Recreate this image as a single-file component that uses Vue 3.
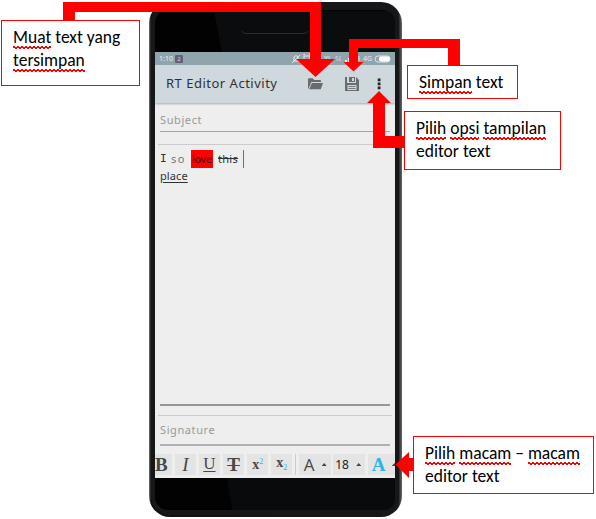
<script setup>
const callouts = [
  { id: 'load', lines: [[['Muat', true], [' text yang']], [['tersimpan', true]]] },
  { id: 'save', lines: [[['Simpan', true], [' text']]] },
  { id: 'options', lines: [[['Pilih', true], [' '], ['opsi', true], [' '], ['tampilan', true]], [['editor text']]] },
  { id: 'tools', lines: [[['Pilih', true], [' '], ['macam', true], [' – '], ['macam', true]], [['editor text']]] },
]
</script>

<template>
  <main class="canvas">
    <section class="phone">
      <svg class="shell" viewBox="0 0 253 515">
        <defs>
          <linearGradient id="rim" x1="0" x2="1">
            <stop offset="0" stop-color="#777" /><stop offset=".008" stop-color="#111" />
            <stop offset=".985" stop-color="#17191b" /><stop offset="1" stop-color="#66696b" />
          </linearGradient>
        </defs>
        <rect width="253" height="515" rx="21" fill="url(#rim)" />
        <rect x="2" y="2" width="248" height="511" rx="19" fill="#161718" />
        <rect x="6" y="8" width="240" height="500" rx="13" fill="#020202" />
        <path d="M65 9H233Q246 9 246 22V50H73Z" fill="#0b0c0d" />
        <path d="M78 476H246V495Q246 508 233 508H83Z" fill="#090a0b" />
        <path d="M93 29Q94 31.5 97 31.5H155Q158 31.5 159 29" fill="none" stroke="#2c2c2c" />
      </svg>
      <div class="screen">
        <div class="status">
          <span class="clock">1:10</span><span class="badge">2</span>
          <svg class="signals" viewBox="0 0 106 13">
            <g fill="none" stroke="#e4eaec" stroke-width="1">
              <path d="M5 8V5q2-3 4 0v3M4 9h6M3 11l8-8M15 4h6v6h-6zM14 3l2-1M22 3l-2-1" />
              <path d="M48 9V4m-2 2 2-2M51 4v5m-2-2 2 2" opacity=".55" />
            </g>
            <path d="M56 10h2V8h-2zm3 0h2V6h-2z" fill="#e4eaec" />
            <text x="35" y="9" class="tiny">XL</text><text x="67" y="9" class="tiny">3</text><text x="74" y="9" class="tiny">4G</text>
            <rect x="86" y="4" width="15" height="6" rx="3" fill="none" stroke="#dce4e7" />
            <rect x="90" y="4.5" width="11" height="5" rx="2" fill="#fff" />
          </svg>
        </div>
        <header class="appbar">
          <h1>RT Editor Activity</h1>
          <svg class="folder" viewBox="0 0 15 12"><path d="M0 11V1.2Q0 .3 1 .3h3.8L6.3 2H12q1 0 1 1v1H3.3L.8 10zM1.2 11.3 3.8 5H15l-2.2 6.3z" fill="#686c6d" /></svg>
          <svg class="disk" viewBox="0 0 14 14"><path fill-rule="evenodd" d="M0 0h2v6h9V0l3 3v11H0zM2.5 8v5h9V8zM4 0h6v5H4zm3 1v3h2V1z" fill="#696d70" /><path d="M3.5 9.5h7m-7 2h7" stroke="#777b7d" /></svg>
          <svg class="dots" viewBox="0 0 4 12"><path d="M.7.5h2.8v2.8H.7zm0 4h2.8v2.8H.7zm0 4h2.8v2.8H.7z" fill="#202426" /></svg>
        </header>
        <div class="field subject"><span>Subject</span></div>
        <div class="editor">
          <p><span class="first">I</span><span class="so">so</span><mark>love</mark><s>this</s><i class="caret"></i></p>
          <p><u>place</u></p>
        </div>
        <div class="rule"></div>
        <div class="field signature"><span>Signature</span></div>
        <nav class="toolbar">
          <b class="tool bold">B</b>
          <em class="tool">I</em>
          <span class="tool under">U</span>
          <span class="tool strike">T</span>
          <span class="tool script">x<sup>2</sup></span>
          <span class="tool script low">x<sub>2</sub></span>
          <i class="split"></i>
          <span class="tool wide face">A<i class="tri"></i></span>
          <span class="tool wide size">18<i class="tri"></i></span>
          <span class="tool wide color">A<i class="tri"></i></span>
        </nav>
      </div>
    </section>

    <svg class="arrows" viewBox="0 0 596 519" fill="#f00">
      <path d="M63 21V2H321V59H335L315.5 77 296 59H310V12H75V21Z" />
      <path d="M448 66V48H358V62H363.5L353.5 71.5 343.5 62H349V39H460V66Z" />
      <path d="M405 148H373V103H367L379 91 391 103H385V136H405Z" />
      <path d="M414 471H409V478L395.5 464.5 409 452V458H414Z" />
    </svg>

    <aside v-for="c in callouts" :key="c.id" class="callout" :class="c.id">
      <div v-for="(line, n) in c.lines" :key="n" class="line"><span v-for="(part, k) in line" :key="k" :class="{ typo: part[1] }">{{ part[0] }}</span></div>
    </aside>
  </main>
</template>

<style>
body { margin: 0; background: #fff; }
</style>

<style scoped>
* { box-sizing: border-box; }
.canvas { position: relative; width: 596px; height: 519px; overflow: hidden; background: #fff; }
.phone { position: absolute; left: 149px; top: 2px; width: 253px; height: 515px; padding: 50px 7px 39px 6px; }
.shell { position: absolute; left: 0; top: 0; width: 253px; height: 515px; }
.screen { position: relative; width: 240px; height: 426px; overflow: hidden; background: #eee; display: flex; flex-direction: column; font-family: "Noto Sans", sans-serif; color: #303335; }
.status { height: 13px; flex: none; background: #90a4ad; display: flex; align-items: center; padding-left: 4px; }
.clock { width: 16px; font-size: 7px; line-height: 12px; color: #edf2f4; }
.badge { width: 8px; height: 8px; border-radius: 1px; background: #62627c; color: #d7d7e0; font-size: 6px; line-height: 8px; text-align: center; }
.signals { width: 106px; height: 13px; margin-left: auto; }
.tiny { font: 7px "Noto Sans", sans-serif; fill: #e8eef0; }
.appbar { height: 38px; flex: none; display: flex; align-items: center; background: #cfd8dc; box-shadow: 0 1px 2px #aaa; padding-left: 11px; }
h1 { margin: 0 0 2px; width: 142px; font-size: 13px; line-height: 20px; font-weight: 400; white-space: nowrap; letter-spacing: .5px; }
.folder { width: 15px; height: 12px; }
.disk { width: 14px; height: 14px; margin-left: 22px; }
.dots { width: 4px; height: 12px; margin-left: 18px; }
.field { flex: none; color: #999; font-size: 11px; line-height: 15px; letter-spacing: .6px; margin: 0 5px; border-bottom: 1px solid #a5a5a5; }
.subject { height: 29px; padding-top: 9px; }
.editor { height: 262px; flex: none; margin: 12px 3px 0; border-top: 1px solid #ccc; padding: 5px 2px 0; display: flex; flex-direction: column; }
.editor::after { content: ""; flex: none; margin-top: auto; height: 2px; background: #92979a; }
.editor p { margin: 0; height: 17px; line-height: 18px; font-size: 11px; display: flex; }
.first { width: 11px; font-family: "DejaVu Sans Mono", monospace; }
.so { width: 20px; font-size: 11px; letter-spacing: 1.5px; color: #777; }
mark { background: #f00; color: #350000; width: 22px; height: 18px; text-align: center; margin-right: 5px; font-size: 10.5px; }
s { letter-spacing: .3px; width: 25px; }
.caret { width: 1px; height: 18px; margin-left: 0; background: #66747b; }
u { letter-spacing: .1px; text-underline-offset: 2px; }
.rule { flex: none; height: 1px; margin: 9px 3px 0; background: #ccc; }
.signature { height: 30px; padding-top: 6px; border-bottom: 2px solid #b0b0b0; }
.toolbar { display: flex; flex: none; gap: 2.6px; margin-top: 8px; height: 21px; width: 240px; font-family: "Liberation Serif", serif; }
.tool { flex: none; width: 21.5px; height: 21px; background: #e4e4e4; font-size: 19px; line-height: 21px; text-align: center; color: #484848; }
.bold { width: 17px; text-align: left; }
.under { text-decoration: underline; text-decoration-thickness: 1px; text-underline-offset: 2px; font-size: 17px; line-height: 19px; }
.strike { font-weight: 700; text-decoration: line-through; text-decoration-thickness: 1px; }
.script { font-size: 14px; font-weight: 700; }
.low { line-height: 18px; }
sup, sub { font-size: 8px; font-weight: 400; line-height: 0; color: #2bb5e9; }
sup { vertical-align: 5px; }
sub { vertical-align: -3px; }
.split { flex: none; width: 1px; background: #ccc; }
.wide { width: 32px; display: flex; align-items: center; justify-content: space-between; padding: 0 4px 0 5px; }
.face { font-family: "Open Sans", sans-serif; font-size: 17px; }
.size { font: 12px "Noto Sans", sans-serif; padding-left: 2px; color: #222; }
.color { padding: 0 3px 0 4px; color: #2bb5e9; font-weight: 700; }
.tri { flex: none; width: 5px; height: 3px; background: #444; clip-path: polygon(50% 0, 100% 100%, 0 100%); }
.arrows { position: absolute; left: 0; top: 0; width: 596px; height: 519px; }
.callout { position: absolute; background: #fff; border: 1px solid #f00; padding: 5px 0 0 11px; font-family: Carlito, Lato, sans-serif; font-size: 17.5px; line-height: 23px; color: #000; white-space: pre; }
.load { left: 1px; top: 20px; width: 139px; height: 66px; }
.save { left: 407px; top: 65px; width: 111px; height: 34px; }
.options { left: 404px; top: 111px; width: 157px; height: 59px; }
.tools { left: 413px; top: 436px; width: 181px; height: 58px; }
.line { height: 23px; }
.typo {
  display: inline-block;
  height: 23px;
  background:
    linear-gradient(45deg, transparent 42%, #f00 42% 60%, transparent 60%) 0 100% / 4px 3px repeat-x,
    linear-gradient(-45deg, transparent 42%, #f00 42% 60%, transparent 60%) 2px 100% / 4px 3px repeat-x;
}
</style>
